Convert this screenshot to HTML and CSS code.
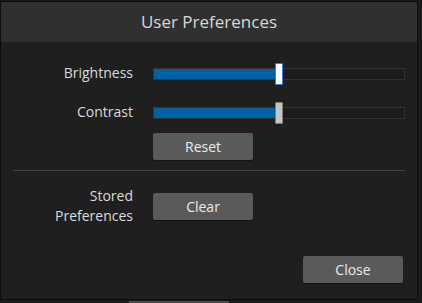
FILE: index.html
```html
<!DOCTYPE html>
<html lang="en">
<head>
    <meta charset="UTF-8">
    <title>User Preferences</title>
    <link rel="stylesheet" href="styles.css">
</head>
<body>

    <div class="dialog">
        <div class="dialog-header">User Preferences</div>

        <div class="dialog-body">
            <div class="row slider-row">
                <label class="label">Brightness</label>
                <div class="slider">
                    <div class="slider-fill" style="width: 50%"></div>
                    <div class="slider-thumb active" style="left: 50%"></div>
                </div>
            </div>

            <div class="row slider-row">
                <label class="label">Contrast</label>
                <div class="slider">
                    <div class="slider-fill" style="width: 50%"></div>
                    <div class="slider-thumb" style="left: 50%"></div>
                </div>
            </div>

            <div class="row button-row">
                <span class="label"></span>
                <div><button>Reset</button></div>
            </div>

            <hr class="divider">

            <div class="row stored-row">
                <label class="label">Stored<br>Preferences</label>
                <div><button>Clear</button></div>
            </div>

            <div class="footer">
                <button>Close</button>
            </div>
        </div>
    </div>

    <div class="under-bar"></div>

</body>
</html>
```

FILE: styles.css
```css
body {
    margin: 0;
    padding-top: 1px;
    background-color: #1a1a1a;
    font-family: "Open Sans", "Noto Sans", sans-serif;
    font-size: 14px;
    color: #dcdcdc;
}
.dialog {
    width: 416px;
    height: 297px;
    border: 1px solid #0d0d0d;
    background-color: #1f1f1f;
}
.dialog-header {
    height: 40px;
    line-height: 40px;
    background-color: #303030;
    text-align: center;
    font-size: 17px;
    color: #d8d8d8;
}
.dialog-body {
    padding: 0 12px;
}
.row {
    display: grid;
    grid-template-columns: 120px 1fr;
    column-gap: 20px;
    align-items: center;
}
.label {
    text-align: right;
    color: #dcdcdc;
}
.slider-row {
    height: 22px;
    margin-top: 17px;
}
.slider-row:first-child {
    margin-top: 21px;
}
.slider-row .label {
    margin-top: -3px;
}
.slider {
    position: relative;
    height: 10px;
    border: 1px solid #333;
    background-color: #1c1c1c;
}
.slider-fill {
    height: 100%;
    background-color: #0062a3;
}
.slider-thumb {
    position: absolute;
    top: -6px;
    width: 6px;
    height: 20px;
    margin-left: -4px;
    background-color: #c6c6c6;
    border: 1px solid #7a7a7a;
    border-radius: 1px;
}
.slider-thumb.active {
    background-color: #fff;
    border-color: #2b7fd4;
}
.button-row {
    margin-top: 9px;
}
button {
    width: 100px;
    height: 27px;
    padding: 0;
    background-color: #5a5a5a;
    color: #ececec;
    border: none;
    border-radius: 2px;
    box-shadow: 0 1px 1px rgba(0, 0, 0, 0.4);
    font-family: inherit;
    font-size: 14px;
    cursor: pointer;
}
button:hover {
    background-color: #666;
}
.divider {
    margin: 10px 0 0;
    border: none;
    border-top: 1px solid #444;
}
.stored-row {
    margin-top: 15px;
    line-height: 20px;
}
.footer {
    display: flex;
    justify-content: flex-end;
    margin-top: 30px;
    padding-right: 2px;
}
.under-bar {
    width: 100px;
    height: 2px;
    margin: 1px 0 0 129px;
    background-color: #4a4a4a;
}
```
